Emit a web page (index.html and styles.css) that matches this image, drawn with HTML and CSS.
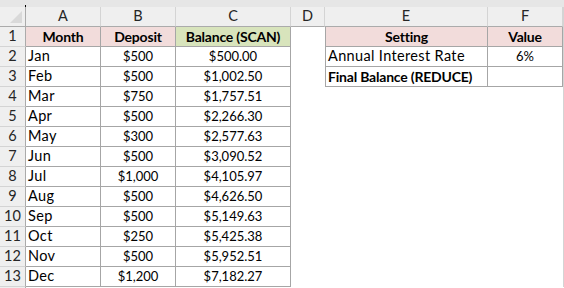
FILE: index.html
```html
<!DOCTYPE html>
<html>
<head>
<meta charset="utf-8">
<link rel="stylesheet" href="styles.css">
</head>
<body>
<div class="sheet">
  <div class="strip"><span class="tick"></span></div>

  <div class="corner"><span class="tri"></span></div>
  <div class="ch">A</div>
  <div class="ch">B</div>
  <div class="ch">C</div>
  <div class="ch">D</div>
  <div class="ch">E</div>
  <div class="ch">F</div>
  <div class="edge"></div>

  <div class="rh">1</div>
  <div class="c hd pink ctr">Month</div>
  <div class="c hd pink ctr">Deposit</div>
  <div class="c hd green ctr">Balance (SCAN)</div>
  <div class="d"></div>
  <div class="c hd pink ctr e">Setting</div>
  <div class="c hd pink ctr">Value</div>
  <div class="edge"></div>

  <div class="rh">2</div>
  <div class="c t">Jan</div>
  <div class="c ctr n">$500</div>
  <div class="c ctr n">$500.00</div>
  <div class="d"></div>
  <div class="c e t">Annual Interest Rate</div>
  <div class="c ctr n">6%</div>
  <div class="edge"></div>

  <div class="rh">3</div>
  <div class="c t">Feb</div>
  <div class="c ctr n">$500</div>
  <div class="c ctr n">$1,002.50</div>
  <div class="d"></div>
  <div class="c e hd">Final Balance (REDUCE)</div>
  <div class="c"></div>
  <div class="edge"></div>

  <div class="rh">4</div>
  <div class="c t">Mar</div>
  <div class="c ctr n">$750</div>
  <div class="c ctr n">$1,757.51</div>
  <div class="blank"></div>
  <div class="edge"></div>

  <div class="rh">5</div>
  <div class="c t">Apr</div>
  <div class="c ctr n">$500</div>
  <div class="c ctr n">$2,266.30</div>
  <div class="blank"></div>
  <div class="edge"></div>

  <div class="rh">6</div>
  <div class="c t">May</div>
  <div class="c ctr n">$300</div>
  <div class="c ctr n">$2,577.63</div>
  <div class="blank"></div>
  <div class="edge"></div>

  <div class="rh">7</div>
  <div class="c t">Jun</div>
  <div class="c ctr n">$500</div>
  <div class="c ctr n">$3,090.52</div>
  <div class="blank"></div>
  <div class="edge"></div>

  <div class="rh">8</div>
  <div class="c t">Jul</div>
  <div class="c ctr n">$1,000</div>
  <div class="c ctr n">$4,105.97</div>
  <div class="blank"></div>
  <div class="edge"></div>

  <div class="rh">9</div>
  <div class="c t">Aug</div>
  <div class="c ctr n">$500</div>
  <div class="c ctr n">$4,626.50</div>
  <div class="blank"></div>
  <div class="edge"></div>

  <div class="rh">10</div>
  <div class="c t">Sep</div>
  <div class="c ctr n">$500</div>
  <div class="c ctr n">$5,149.63</div>
  <div class="blank"></div>
  <div class="edge"></div>

  <div class="rh">11</div>
  <div class="c t">Oct</div>
  <div class="c ctr n">$250</div>
  <div class="c ctr n">$5,425.38</div>
  <div class="blank"></div>
  <div class="edge"></div>

  <div class="rh">12</div>
  <div class="c t">Nov</div>
  <div class="c ctr n">$500</div>
  <div class="c ctr n">$5,952.51</div>
  <div class="blank"></div>
  <div class="edge"></div>

  <div class="rh">13</div>
  <div class="c t">Dec</div>
  <div class="c ctr n">$1,200</div>
  <div class="c ctr n">$7,182.27</div>
  <div class="blank"></div>
  <div class="edge"></div>

  <div class="rh rest"></div>
  <div class="tail"></div>
</div>
</body>
</html>
```
FILE: styles.css
```css
html, body {
  margin: 0;
  padding: 0;
  background: #ffffff;
}
body {
  font-family: Lato, "Liberation Sans", sans-serif;
  font-size: 14px;
  color: #000;
}
.sheet {
  width: 564px;
  height: 288px;
  display: grid;
  grid-template-columns: 26px 75px 75px 115px 34px 163px 75px 1fr;
  grid-template-rows: 7px repeat(14, 20px) 1fr;
  overflow: hidden;
}
.strip {
  grid-column: 1 / -1;
  background: #e6e6e6;
  position: relative;
}
.tick {
  position: absolute;
  left: 25px;
  bottom: 0;
  width: 1px;
  height: 2px;
  background: #000;
}
.corner {
  background: #efefef;
  border-right: 1px solid #ababab;
  border-bottom: 1px solid #ababab;
  position: relative;
}
.tri {
  position: absolute;
  right: 3px;
  bottom: 3px;
  width: 0;
  height: 0;
  border-left: 12px solid transparent;
  border-bottom: 12px solid #d9d9d9;
}
.ch {
  background: #efefef;
  border-right: 1px solid #d4d4d4;
  border-bottom: 1px solid #ababab;
  display: flex;
  align-items: center;
  justify-content: center;
  color: #262626;
  line-height: 1;
  font-size: 14.5px;
}
.edge {
  background: #ffffff;
  border-left: 1px solid #d4d4d4;
}
.rh {
  background: #efefef;
  border-right: 1px solid #ababab;
  border-bottom: 1px solid #d4d4d4;
  display: flex;
  align-items: center;
  justify-content: center;
  color: #262626;
  line-height: 1;
  font-size: 14.5px;
}
.rest {
  border-bottom: none;
}
.tail {
  grid-column: 2 / -1;
}
.c {
  border-right: 1px solid #a6a6a6;
  border-bottom: 1px solid #a6a6a6;
  display: flex;
  align-items: center;
  padding: 0 2px;
  white-space: nowrap;
  overflow: hidden;
  line-height: 1;
}
.t {
  font-size: 14.5px;
  letter-spacing: 0.35px;
}
.n {
  font-size: 13px;
}
.ctr {
  justify-content: center;
}
.hd {
  font-weight: 700;
  font-size: 14px;
  letter-spacing: -0.2px;
}
.pink {
  background: #f2dcdb;
}
.green {
  background: #d8e4bc;
}
.e {
  border-left: 1px solid #a6a6a6;
}
.d {
  background: #fff;
}
.blank {
  grid-column: 5 / 8;
}
```
